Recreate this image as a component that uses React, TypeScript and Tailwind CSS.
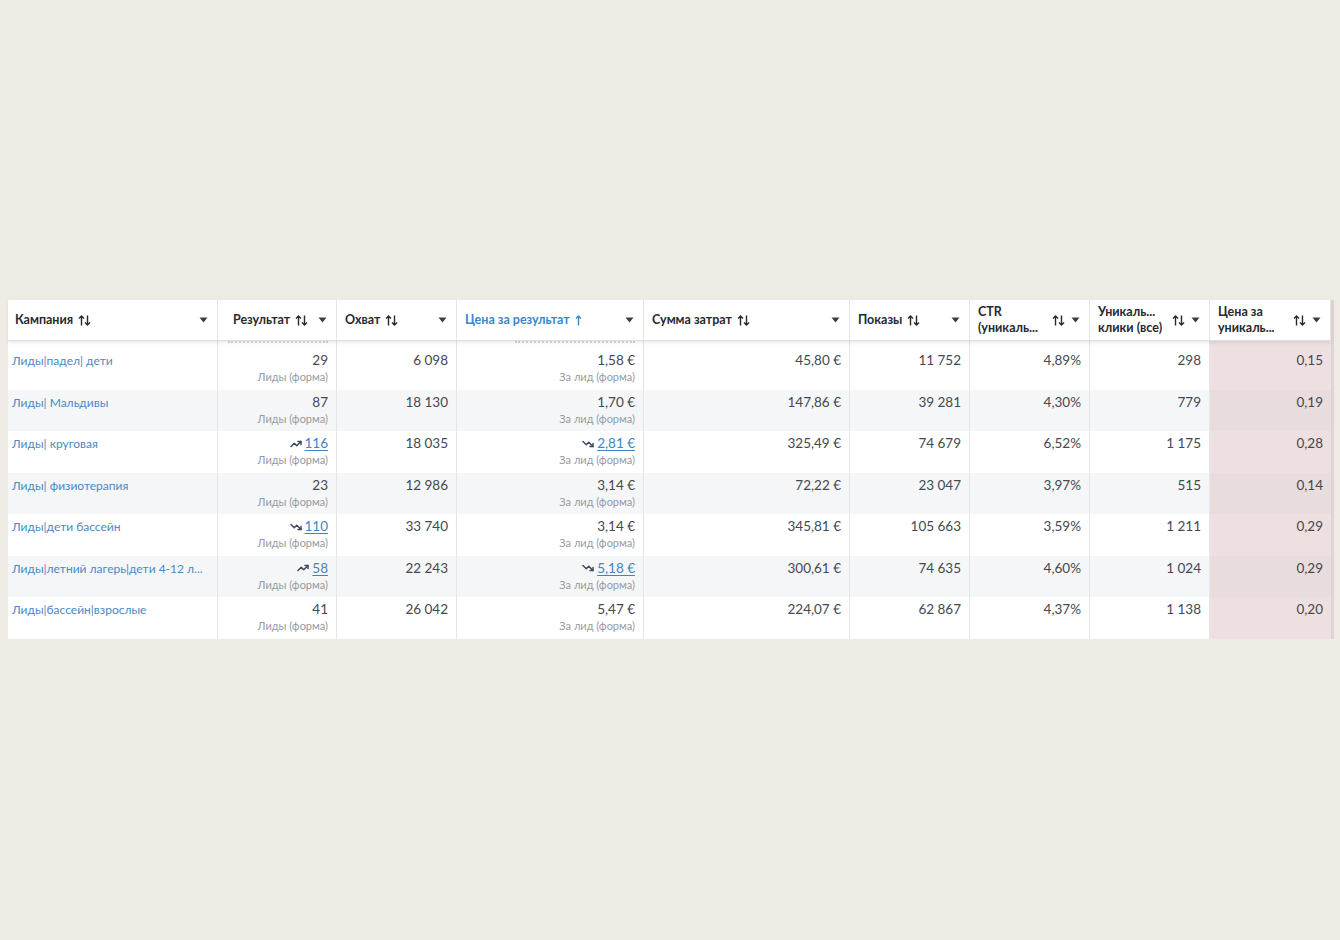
import { TrendingUp, TrendingDown } from 'lucide-react';

type Trend = 'up' | 'down' | undefined;

interface Row {
  name: string;
  result: string;
  resultTrend?: Trend;
  reach: string;
  cost: string;
  costTrend?: Trend;
  spend: string;
  shows: string;
  ctr: string;
  clicks: string;
  unique: string;
}

const rows: Row[] = [
  { name: 'Лиды|падел| дети', result: '29', reach: '6 098', cost: '1,58 €', spend: '45,80 €', shows: '11 752', ctr: '4,89%', clicks: '298', unique: '0,15' },
  { name: 'Лиды| Мальдивы', result: '87', reach: '18 130', cost: '1,70 €', spend: '147,86 €', shows: '39 281', ctr: '4,30%', clicks: '779', unique: '0,19' },
  { name: 'Лиды| круговая', result: '116', resultTrend: 'up', reach: '18 035', cost: '2,81 €', costTrend: 'down', spend: '325,49 €', shows: '74 679', ctr: '6,52%', clicks: '1 175', unique: '0,28' },
  { name: 'Лиды| физиотерапия', result: '23', reach: '12 986', cost: '3,14 €', spend: '72,22 €', shows: '23 047', ctr: '3,97%', clicks: '515', unique: '0,14' },
  { name: 'Лиды|дети бассейн', result: '110', resultTrend: 'down', reach: '33 740', cost: '3,14 €', spend: '345,81 €', shows: '105 663', ctr: '3,59%', clicks: '1 211', unique: '0,29' },
  { name: 'Лиды|летний лагерь|дети 4-12 л...', result: '58', resultTrend: 'up', reach: '22 243', cost: '5,18 €', costTrend: 'down', spend: '300,61 €', shows: '74 635', ctr: '4,60%', clicks: '1 024', unique: '0,29' },
  { name: 'Лиды|бассейн|взрослые', result: '41', reach: '26 042', cost: '5,47 €', spend: '224,07 €', shows: '62 867', ctr: '4,37%', clicks: '1 138', unique: '0,20' },
];

const cols = 'grid grid-cols-[210px_119px_120px_187px_206px_120px_120px_120px_121px]';

function SortIcon({ single }: { single?: boolean }) {
  return (
    <svg width={single ? 7 : 13} height="11" viewBox={single ? '0 0 7 11' : '0 0 13 11'} className="ml-[5px] shrink-0">
      <path d="M3.5 10.5V1M1 3.5l2.5-2.5 2.5 2.5" fill="none" stroke="currentColor" strokeWidth="1.4" />
      {!single && <path d="M9.5 0.5V10M7 7.5l2.5 2.5 2.5-2.5" fill="none" stroke="currentColor" strokeWidth="1.4" />}
    </svg>
  );
}

function Caret() {
  return (
    <svg width="9" height="6" viewBox="0 0 9 6" className="shrink-0">
      <path d="M0.5 0.5h8L4.5 5.5z" fill="#3c3f44" />
    </svg>
  );
}

function Head({ children, active, pl = 'pl-2' }: { children: React.ReactNode; active?: boolean; pl?: string }) {
  return (
    <div className={`flex items-center justify-between border-r border-[#e4e6ea] ${pl} pr-[9px]`}>
      <span className={`flex items-center font-bold text-[12.5px] ${active ? 'text-[#3d86c6]' : 'text-[#26292e]'}`}>
        {children}
        <SortIcon single={active} />
      </span>
      <Caret />
    </div>
  );
}

function Head2({ line1, line2 }: { line1: string; line2: string }) {
  return (
    <div className="flex items-center justify-between border-r border-[#e4e6ea] pl-2 pr-[9px]">
      <span className="flex flex-col font-bold text-[12.5px] leading-[16px] text-[#26292e]">
        <span>{line1}</span>
        <span>{line2}</span>
      </span>
      <span className="flex items-center gap-[6px] text-[#26292e]">
        <SortIcon />
        <Caret />
      </span>
    </div>
  );
}

function Value({ value, trend, sub }: { value: string; trend?: Trend; sub?: string }) {
  return (
    <div className="flex flex-col items-end border-r border-[#e4e6ea] pr-2 pt-[3px]">
      {trend ? (
        <span className="flex items-center gap-[3px] text-[13.5px] leading-[19px]">
          {trend === 'up' ? (
            <TrendingUp className="h-3 w-3 text-[#3d4a5c]" strokeWidth={3} />
          ) : (
            <TrendingDown className="h-3 w-3 text-[#3d4a5c]" strokeWidth={3} />
          )}
          <span className="text-[#3d86c6] underline underline-offset-2">{value}</span>
        </span>
      ) : (
        <span className="text-[13.5px] leading-[19px] text-[#44484f]">{value}</span>
      )}
      {sub && <span className="text-[11px] leading-[14px] text-[#959aa2]">{sub}</span>}
    </div>
  );
}

// bottom edge of the row scrolled under the sticky header
function CutText({ w }: { w: string }) {
  return (
    <div className="flex justify-end border-r border-[#e4e6ea] pr-2">
      <div className={`h-[2px] ${w} border-t-2 border-dotted border-[#d3d6da]`} />
    </div>
  );
}

export default function App() {
  return (
    <div className="h-[940px] w-full bg-[#eeebe5] pt-[300px] pl-2" style={{ fontFamily: 'Lato, "Noto Sans", sans-serif' }}>
      <div className="w-[1326px] border-r-[3px] border-[#e0d3d5] bg-white">
        <div className={`${cols} relative z-10 h-[41px] border-b border-[#dcdfe3] bg-white shadow-[0_2px_3px_rgba(0,0,0,0.08)]`}>
          <Head pl="pl-[7px]">Кампания</Head>
          <Head pl="pl-[15px]">Результат</Head>
          <Head>Охват</Head>
          <Head active>Цена за результат</Head>
          <Head>Сумма затрат</Head>
          <Head>Показы</Head>
          <Head2 line1="CTR" line2="(уникаль..." />
          <Head2 line1="Уникаль..." line2="клики (все)" />
          <Head2 line1="Цена за" line2="уникаль..." />
        </div>

        <div className={`${cols} h-[7px] overflow-hidden`}>
          <div className="border-r border-[#e4e6ea]" />
          <CutText w="w-[100px]" />
          <div className="border-r border-[#e4e6ea]" />
          <CutText w="w-[120px]" />
          <div className="border-r border-[#e4e6ea]" />
          <div className="border-r border-[#e4e6ea]" />
          <div className="border-r border-[#e4e6ea]" />
          <div className="border-r border-[#e4e6ea]" />
          <div className="bg-[#eddfe0]" />
        </div>

        {rows.map((r, i) => {
          const odd = i % 2 === 1;
          return (
            <div key={r.name} className={`${cols} h-[41.5px] ${odd ? 'bg-[#f5f6f7]' : 'bg-white'}`}>
              <div className="border-r border-[#e4e6ea] pl-1 pt-[3px]">
                <div className="whitespace-nowrap text-[12px] leading-[19px] text-[#4a88c6]">{r.name}</div>
              </div>
              <Value value={r.result} trend={r.resultTrend} sub="Лиды (форма)" />
              <Value value={r.reach} />
              <Value value={r.cost} trend={r.costTrend} sub="За лид (форма)" />
              <Value value={r.spend} />
              <Value value={r.shows} />
              <Value value={r.ctr} />
              <Value value={r.clicks} />
              <div className={`flex justify-end pr-2 pt-[3px] ${odd ? 'bg-[#e8dcdd]' : 'bg-[#eee0e1]'}`}>
                <span className="text-[13.5px] leading-[19px] text-[#44484f]">{r.unique}</span>
              </div>
            </div>
          );
        })}
      </div>
    </div>
  );
}
